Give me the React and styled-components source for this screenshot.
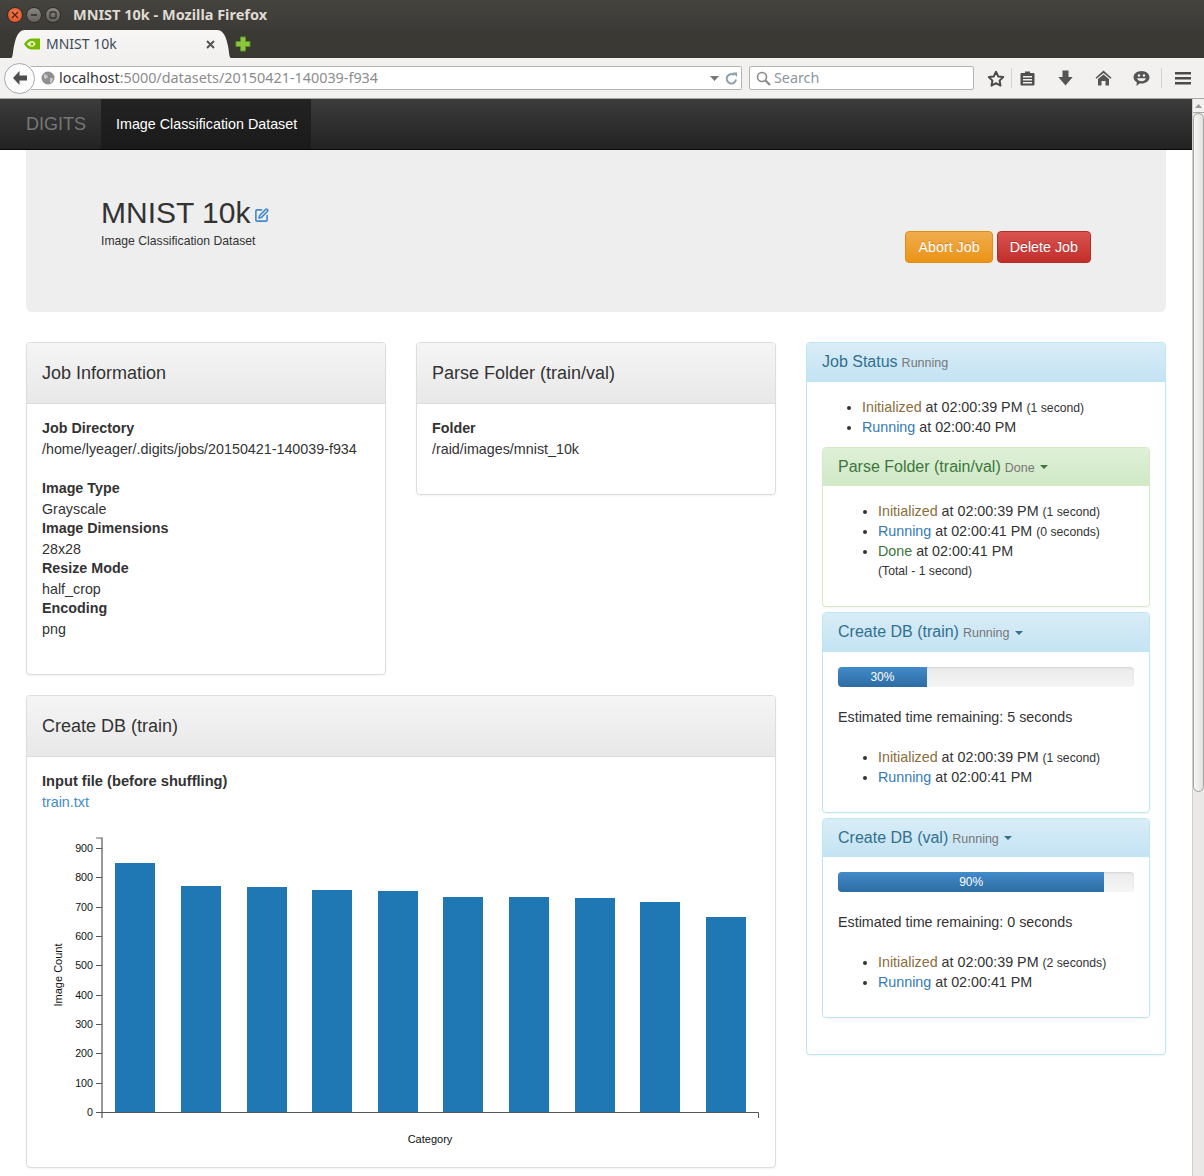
import React from 'react'
import styled, { createGlobalStyle } from 'styled-components'
import { SquarePen } from 'lucide-react'

const GlobalStyle = createGlobalStyle`
  html, body {
    margin: 0;
    padding: 0;
    background: #fff;
  }
  body {
    font-family: "Liberation Sans", Arial, sans-serif;
    font-size: 14.3px;
    line-height: 20px;
    color: #333;
  }
  * {
    box-sizing: border-box;
  }
`

const bars = [
  { x: 115, top: 862 },
  { x: 181, top: 885 },
  { x: 247, top: 886 },
  { x: 312, top: 889 },
  { x: 378, top: 890 },
  { x: 443, top: 896 },
  { x: 509, top: 896 },
  { x: 575, top: 897 },
  { x: 640, top: 901 },
  { x: 706, top: 916 },
]

const yTicks = [900, 800, 700, 600, 500, 400, 300, 200, 100, 0]

function Chart() {
  return (
    <ChartSvg width="750" height="330" viewBox="26 825 750 330">
      {bars.map((b) => (
        <rect key={b.x} x={b.x} y={b.top} width="40" height={1112 - b.top} fill="#1f77b4" />
      ))}
      <line x1="96" x2="102" y1="837" y2="837" stroke="#666" />
      <line x1="102" x2="102" y1="836.500" y2="1117" stroke="#777" strokeWidth="1.500" />
      <path d="M102 1111.500H758.500V1117" fill="none" stroke="#555" strokeWidth="1" />
      {yTicks.map((t) => {
        const y = Math.floor(1111.5 - t * 0.2933) + 0.5
        return (
          <g key={t}>
            <line x1="96" x2="102" y1={y} y2={y} stroke="#555" />
            <text x="93" y={y + 3.5} textAnchor="end" fontSize="10.7" fill="#111" fontFamily="Liberation Sans">{t}</text>
          </g>
        )
      })}
      <text x="430" y="1142" textAnchor="middle" fontSize="11" fill="#111" fontFamily="Liberation Sans">Category</text>
      <text transform="translate(62 974) rotate(-90)" textAnchor="middle" fontSize="11" fill="#111" fontFamily="Liberation Sans">Image Count</text>
    </ChartSvg>
  )
}

function StatusList({ items }) {
  return (
    <StatusUl>
      {items.map((it) => (
        <li key={it.state}>
          <StateName $state={it.state}>{it.state}</StateName> at {it.at}
          {it.took && <> <small>{it.took}</small></>}
          {it.total && <TotalLine>{it.total}</TotalLine>}
        </li>
      ))}
    </StatusUl>
  )
}

function SubPanel({ title, status, kind, children, height, headingHeight }) {
  return (
    <NestedPanel $kind={kind} $height={height}>
      <StatusHeading $kind={kind} $height={headingHeight}>
        <StatusTitle>{title}</StatusTitle> <StatusNote>{status}</StatusNote>
        <Caret />
      </StatusHeading>
      <NestedBody>{children}</NestedBody>
    </NestedPanel>
  )
}

function Progress({ value }) {
  return (
    <ProgressTrack>
      <ProgressBar style={{ width: `${value}%` }}>{value}%</ProgressBar>
    </ProgressTrack>
  )
}

export default function App() {
  return (
    <Screen>
      <GlobalStyle />
      <TitleBar>
        <WindowButtons>
          <WindowClose>
            <svg width="8" height="8" viewBox="0 0 8 8"><path d="M1 1l6 6M7 1l-6 6" stroke="#5b1d08" strokeWidth="1.4" /></svg>
          </WindowClose>
          <WindowButton>
            <svg width="8" height="8" viewBox="0 0 8 8"><path d="M1 4h6" stroke="#33312e" strokeWidth="1.6" /></svg>
          </WindowButton>
          <WindowButton>
            <svg width="8" height="8" viewBox="0 0 8 8"><rect x="1" y="1" width="6" height="6" rx="1" fill="none" stroke="#33312e" strokeWidth="1.3" /></svg>
          </WindowButton>
        </WindowButtons>
        <WindowTitle>MNIST 10k - Mozilla Firefox</WindowTitle>
      </TitleBar>
      <TabStrip>
        <ActiveTab>
          <svg width="16" height="12" viewBox="0 0 16 12">
            <path d="M0 6C2 2.5 5 .5 8 .5h8v11H7C4.500 11.500 2 9 0 6z" fill="#76b900" />
            <path d="M3 6c1.500-2 3-3 5-3 1.500 0 3 1 3.500 3-.5 1.500-2 2.800-3.500 2.800C6 8.800 4.500 7.800 3 6z" fill="#e8f3cf" />
            <circle cx="8" cy="6" r="1.500" fill="#76b900" />
          </svg>
          <TabLabel>MNIST 10k</TabLabel>
          <TabClose>
            <svg width="9" height="9" viewBox="0 0 9 9"><path d="M1 1l7 7M8 1l-7 7" stroke="#555" strokeWidth="2" /></svg>
          </TabClose>
        </ActiveTab>
        <NewTab>
          <svg width="16" height="16" viewBox="0 0 16 16">
            <path d="M5.500 1h5v4.500H15v5h-4.500V15h-5v-4.500H1v-5h4.500z" fill="#8cc63f" stroke="#5f8f26" strokeWidth="1" />
          </svg>
        </NewTab>
      </TabStrip>
      <NavToolbar>
        <BackButton>
          <svg width="18" height="16" viewBox="0 0 18 16">
            <path d="M8.500 1L2 8l6.500 7V10.500H16v-5H8.500z" fill="#4d4d4d" />
          </svg>
        </BackButton>
        <UrlBar>
          <svg width="14" height="14" viewBox="0 0 14 14">
            <circle cx="7" cy="7" r="6.500" fill="#8f8f8f" />
            <path d="M3 3l3 1 1 2-2 2-2-1zM9 7l3 0-1 4-2 1z" fill="#c9c9c9" />
          </svg>
          <UrlText><UrlHost>localhost</UrlHost>:5000/datasets/20150421-140039-f934</UrlText>
          <UrlActions>
            <svg width="9" height="5" viewBox="0 0 9 5"><path d="M0 0h9L4.500 5z" fill="#777" /></svg>
            <svg width="13" height="13" viewBox="0 0 13 13">
              <path d="M11 7.500A4.700 4.700 0 1 1 9.200 3" fill="none" stroke="#8aa0ad" strokeWidth="2" />
              <path d="M7.500 0.500h4.500v4.500z" fill="#8aa0ad" />
            </svg>
          </UrlActions>
        </UrlBar>
        <SearchBar>
          <svg width="15" height="15" viewBox="0 0 15 15">
            <circle cx="6" cy="6" r="4.500" fill="none" stroke="#8a8a8a" strokeWidth="1.600" />
            <path d="M9.500 9.500L14 14" stroke="#8a8a8a" strokeWidth="2.200" />
          </svg>
          <SearchText>Search</SearchText>
        </SearchBar>
        <ToolIcons>
          <ToolIcon $width={22}>
            <svg width="18" height="17" viewBox="0 0 18 17">
              <path d="M9 1.800l2.200 4.600 5 .7-3.600 3.500.9 5L9 13.200l-4.500 2.400.9-5L1.800 7.100l5-.7z" fill="none" stroke="#4a4a4a" strokeWidth="2" strokeLinejoin="round" />
            </svg>
          </ToolIcon>
          <ToolSeparator $offset={4} />
          <ToolIcon $width={30}>
            <svg width="15" height="16" viewBox="0 0 15 16">
              <path d="M5 1.500h5V3h3.500a1 1 0 0 1 1 1v10.500a1 1 0 0 1-1 1h-12a1 1 0 0 1-1-1V4a1 1 0 0 1 1-1H5z" fill="#4f4f4f" />
              <path d="M3 6h9v1.500H3zM3 9h9v1.500H3zM3 12h9v1.500H3z" fill="#f2f1f0" />
            </svg>
          </ToolIcon>
          <ToolIcon $width={46}>
            <svg width="15" height="16" viewBox="0 0 15 16">
              <path d="M4.500 0.500h6V7h4.200L7.500 15.500.3 7h4.200z" fill="#555" />
            </svg>
          </ToolIcon>
          <ToolIcon $width={30}>
            <svg width="17" height="16" viewBox="0 0 17 16">
              <path d="M8.500 0.500L0.500 7.800l1 1L8.500 3l7 5.800 1-1z" fill="#555" />
              <path d="M3 9l5.500-4.600L14 9v6.500h-3.500V11h-4v4.500H3z" fill="#555" />
            </svg>
          </ToolIcon>
          <ToolIcon $width={46}>
            <svg width="17" height="17" viewBox="0 0 17 17">
              <path d="M8.500 1C12.900 1 16.500 3.800 16.500 7.300s-3.600 6.300-8 6.300c-.7 0-1.300-.1-2-.2L3.500 16l.3-3.700C1.900 11.200.5 9.400.500 7.300.5 3.800 4.100 1 8.500 1z" fill="#555" />
              <circle cx="6" cy="5.500" r="1.200" fill="#f2f1f0" />
              <circle cx="11" cy="5.500" r="1.200" fill="#f2f1f0" />
              <path d="M4 8.200h9c-.6 2-2.400 3-4.500 3S4.600 10.200 4 8.200z" fill="#f2f1f0" />
            </svg>
          </ToolIcon>
          <ToolSeparator $offset={-3} />
          <ToolIcon $width={42}>
            <svg width="16" height="13" viewBox="0 0 16 13">
              <path d="M0 0h16v2.500H0zM0 5h16v2.500H0zM0 10h16v2.500H0z" fill="#4a4a4a" />
            </svg>
          </ToolIcon>
        </ToolIcons>
      </NavToolbar>
      <Viewport>
        <Page>
          <Navbar>
            <Brand>DIGITS</Brand>
            <ActiveNav>Image Classification Dataset</ActiveNav>
          </Navbar>
          <Container>
            <Jumbotron>
              <div>
                <JobName>MNIST 10k<EditIcon><SquarePen size={15} strokeWidth={2.6} /></EditIcon></JobName>
                <JobKind>Image Classification Dataset</JobKind>
              </div>
              <JobButtons>
                <ActionButton $kind="warning">Abort Job</ActionButton>
                <ActionButton $kind="danger">Delete Job</ActionButton>
              </JobButtons>
            </Jumbotron>
            <Columns>
              <LeftColumn>
                <TopRow>
                  <Panel $height={333}>
                    <PanelHeading>Job Information</PanelHeading>
                    <PanelBody>
                      <InfoList>
                        <dt>Job Directory</dt>
                        <dd>/home/lyeager/.digits/jobs/20150421-140039-f934</dd>
                      </InfoList>
                      <InfoList>
                        <dt>Image Type</dt>
                        <dd>Grayscale</dd>
                        <dt>Image Dimensions</dt>
                        <dd>28x28</dd>
                        <dt>Resize Mode</dt>
                        <dd>half_crop</dd>
                        <dt>Encoding</dt>
                        <dd>png</dd>
                      </InfoList>
                    </PanelBody>
                  </Panel>
                  <Panel $height={153}>
                    <PanelHeading>Parse Folder (train/val)</PanelHeading>
                    <PanelBody>
                      <InfoList>
                        <dt>Folder</dt>
                        <dd>/raid/images/mnist_10k</dd>
                      </InfoList>
                    </PanelBody>
                  </Panel>
                </TopRow>
                <Panel $height={473}>
                  <PanelHeading>Create DB (train)</PanelHeading>
                  <PanelBody>
                    <InfoList $labelSize={14.65}>
                      <dt>Input file (before shuffling)</dt>
                      <dd><FileLink>train.txt</FileLink></dd>
                    </InfoList>
                    <Chart />
                  </PanelBody>
                </Panel>
              </LeftColumn>
              <StatusPanel>
                <StatusHeading $kind="info" $height={39}>
                  <StatusTitle>Job Status</StatusTitle> <StatusNote>Running</StatusNote>
                </StatusHeading>
                <StatusBody>
                  <StatusList items={[
                    { state: 'Initialized', at: '02:00:39 PM', took: '(1 second)' },
                    { state: 'Running', at: '02:00:40 PM' },
                  ]} />
                  <SubPanel title="Parse Folder (train/val)" status="Done" kind="success" height={160}>
                    <StatusList items={[
                      { state: 'Initialized', at: '02:00:39 PM', took: '(1 second)' },
                      { state: 'Running', at: '02:00:41 PM', took: '(0 seconds)' },
                      { state: 'Done', at: '02:00:41 PM', total: '(Total - 1 second)' },
                    ]} />
                  </SubPanel>
                  <SubPanel title="Create DB (train)" status="Running" kind="info" height={201} headingHeight={39}>
                    <Progress value={30} />
                    <Remaining>Estimated time remaining: 5 seconds</Remaining>
                    <StatusList items={[
                      { state: 'Initialized', at: '02:00:39 PM', took: '(1 second)' },
                      { state: 'Running', at: '02:00:41 PM' },
                    ]} />
                  </SubPanel>
                  <SubPanel title="Create DB (val)" status="Running" kind="info" height={200}>
                    <Progress value={90} />
                    <Remaining>Estimated time remaining: 0 seconds</Remaining>
                    <StatusList items={[
                      { state: 'Initialized', at: '02:00:39 PM', took: '(2 seconds)' },
                      { state: 'Running', at: '02:00:41 PM' },
                    ]} />
                  </SubPanel>
                </StatusBody>
              </StatusPanel>
            </Columns>
          </Container>
        </Page>
        <Scrollbar>
          <ScrollUp>
            <svg width="7" height="4" viewBox="0 0 7 4"><path d="M0 4L3.500 0 7 4z" fill="#999" /></svg>
          </ScrollUp>
          <ScrollThumb />
        </Scrollbar>
      </Viewport>
    </Screen>
  )
}

const headingColors = {
  info: { color: '#31708f', from: '#d9edf7', to: '#c4e3f3', border: '#bce8f1' },
  success: { color: '#3c763d', from: '#dff0d8', to: '#d0e9c6', border: '#d6e9c6' },
}

const stateColors = {
  Initialized: '#8a6d3b',
  Running: '#337ab7',
  Done: '#3c763d',
}

const Screen = styled.div`
  width: 1204px;
  height: 1176px;
  overflow: hidden;
  display: flex;
  flex-direction: column;
`

const TitleBar = styled.div`
  height: 29px;
  flex: none;
  display: flex;
  align-items: center;
  padding-left: 7px;
  background: linear-gradient(#45433e, #3d3b37);
`

const WindowButtons = styled.div`
  display: flex;
  gap: 3px;
  width: 66px;
`

const WindowButton = styled.span`
  width: 16px;
  height: 16px;
  border-radius: 50%;
  display: flex;
  align-items: center;
  justify-content: center;
  background: linear-gradient(#8a8780, #63615b);
  border: 1px solid #2f2d2a;
`

const WindowClose = styled(WindowButton)`
  background: radial-gradient(circle at 50% 40%, #f58258, #dd4814);
`

const WindowTitle = styled.span`
  margin-bottom: 2px;
  font-family: "Noto Sans", sans-serif;
  font-weight: 700;
  font-size: 14.5px;
  color: #dfdbd2;
`

const TabStrip = styled.div`
  height: 29px;
  flex: none;
  display: flex;
  align-items: flex-end;
  padding-left: 11px;
  background: #3b3934;
`

const ActiveTab = styled.div`
  width: 220px;
  height: 28px;
  display: flex;
  align-items: center;
  padding: 0 16px 0 13px;
  gap: 6px;
  clip-path: path("M0 28C2 28 2 20 3 16C5 6 8 0 14 0H206C212 0 215 6 217 16C218 20 218 28 220 28Z");
  background: linear-gradient(#f7f6f5, #f2f1f0);
`

const TabLabel = styled.span`
  flex: 1;
  font-family: "Noto Sans", sans-serif;
  font-size: 14px;
  color: #3c4a57;
`

const TabClose = styled.span`
  display: flex;
`

const NewTab = styled.span`
  display: flex;
  margin: 0 0 6px 4px;
`

const NavToolbar = styled.div`
  height: 41px;
  flex: none;
  display: flex;
  align-items: center;
  padding: 0 0 0 4px;
  background: #f2f1f0;
  border-bottom: 1px solid #a9a7a3;
`

const BackButton = styled.span`
  width: 31px;
  height: 31px;
  flex: none;
  display: flex;
  align-items: center;
  justify-content: center;
  border-radius: 50%;
  background: #fbfbfb;
  border: 1px solid #a5aab0;
  position: relative;
  z-index: 1;
`

const UrlBar = styled.div`
  width: 711px;
  height: 24px;
  margin-left: -4px;
  padding: 0 3px 0 10px;
  display: flex;
  align-items: center;
  gap: 4px;
  background: #fff;
  border: 1px solid #b5b3af;
  border-left: none;
  border-radius: 0 2px 2px 0;
`

const UrlText = styled.span`
  flex: 1;
  font-family: "Noto Sans", sans-serif;
  font-size: 14.36px;
  color: #8c8c8c;
`

const UrlHost = styled.span`
  color: #333;
`

const UrlActions = styled.span`
  display: flex;
  align-items: center;
  gap: 6px;
`

const SearchBar = styled.div`
  width: 225px;
  height: 24px;
  margin-left: 7px;
  padding: 0 6px;
  display: flex;
  align-items: center;
  gap: 3px;
  background: #fff;
  border: 1px solid #b5b3af;
  border-radius: 2px;
`

const SearchText = styled.span`
  font-family: "Noto Sans", sans-serif;
  font-size: 14.3px;
  color: #8d96a0;
`

const ToolIcons = styled.div`
  display: flex;
  align-items: center;
  margin-left: 11px;
`

const ToolIcon = styled.span`
  width: ${({ $width }) => $width}px;
  display: flex;
  justify-content: center;
`

const ToolSeparator = styled.span`
  width: 1px;
  height: 20px;
  margin-left: ${({ $offset }) => $offset}px;
  background: #d4d3d0;
`

const Viewport = styled.div`
  flex: 1;
  min-height: 0;
  display: flex;
`

const Page = styled.div`
  width: 1192px;
  flex: none;
  overflow: hidden;
`

const Navbar = styled.div`
  height: 51px;
  padding-left: 26px;
  display: flex;
  background: linear-gradient(#3c3c3c, #222);
  border-bottom: 1px solid #080808;
`

const Brand = styled.span`
  width: 75px;
  font-size: 18px;
  line-height: 50px;
  color: #777;
`

const ActiveNav = styled.span`
  width: 210px;
  padding: 0 15px;
  line-height: 50px;
  white-space: nowrap;
  color: #fff;
  background: linear-gradient(#232323, #1a1a1a);
`

const Container = styled.div`
  width: 1140px;
  margin-left: 26px;
`

const Jumbotron = styled.div`
  height: 162px;
  margin-bottom: 30px;
  padding: 46px 75px 0;
  display: flex;
  justify-content: space-between;
  background: #eee;
  border-radius: 0 0 6px 6px;
`

const JobName = styled.h1`
  margin: 0;
  display: flex;
  align-items: flex-end;
  font-size: 30px;
  font-weight: 400;
  line-height: 33px;
  color: #333;
`

const EditIcon = styled.span`
  display: flex;
  margin: 0 0 6px 3px;
  color: #428bca;
`

const JobKind = styled.div`
  margin-top: 4px;
  font-size: 12.2px;
  line-height: 17px;
`

const JobButtons = styled.div`
  display: flex;
  gap: 4px;
  margin-top: 35px;
  align-self: flex-start;
`

const ActionButton = styled.span`
  height: 32px;
  padding: 0 12px;
  display: flex;
  align-items: center;
  color: #fff;
  border-radius: 4px;
  border: 1px solid ${({ $kind }) => ($kind === 'warning' ? '#e38d13' : '#b92c28')};
  background: ${({ $kind }) => ($kind === 'warning'
    ? 'linear-gradient(#f0ad4e, #eb9316)'
    : 'linear-gradient(#d9534f, #c12e2a)')};
  text-shadow: 0 -1px 0 rgba(0, 0, 0, .2);
`

const Columns = styled.div`
  display: grid;
  grid-template-columns: 750px 360px;
  column-gap: 30px;
  align-items: start;
`

const LeftColumn = styled.div`
  display: flex;
  flex-direction: column;
  gap: 20px;
`

const TopRow = styled.div`
  display: grid;
  grid-template-columns: 360px 360px;
  column-gap: 30px;
  align-items: start;
`

const Panel = styled.section`
  height: ${({ $height }) => $height}px;
  background: #fff;
  border: 1px solid #ddd;
  border-radius: 4px;
  box-shadow: 0 1px 2px rgba(0, 0, 0, .05);
`

const PanelHeading = styled.h3`
  margin: 0;
  height: 61px;
  padding: 0 15px;
  display: flex;
  align-items: center;
  font-size: 18px;
  font-weight: 400;
  color: #333;
  background: linear-gradient(#f5f5f5, #e8e8e8);
  border-bottom: 1px solid #ddd;
  border-radius: 3px 3px 0 0;
`

const PanelBody = styled.div`
  padding: 14px 15px;
`

const InfoList = styled.dl`
  margin: 0 0 20px;
  dt {
    font-weight: 700;
    font-size: ${({ $labelSize }) => $labelSize || 14.3}px;
  }
  dd {
    margin: 0 0 -1px;
    padding-top: 1px;
  }
`

const FileLink = styled.span`
  color: #428bca;
`

const ChartSvg = styled.svg`
  display: block;
  margin: -6px 0 0 -16px;
`

const StatusPanel = styled.section`
  height: 713px;
  background: #fff;
  border: 1px solid #bce8f1;
  border-radius: 4px;
  box-shadow: 0 1px 2px rgba(0, 0, 0, .05);
`

const StatusHeading = styled.div`
  height: ${({ $height }) => $height || 38}px;
  padding: 0 15px;
  display: flex;
  align-items: center;
  gap: 4px;
  color: ${({ $kind }) => headingColors[$kind].color};
  background: linear-gradient(${({ $kind }) => headingColors[$kind].from}, ${({ $kind }) => headingColors[$kind].to});
  border-bottom: 1px solid ${({ $kind }) => headingColors[$kind].border};
  border-radius: 3px 3px 0 0;
`

const StatusTitle = styled.span`
  font-size: 16px;
`

const StatusNote = styled.small`
  font-size: 12.5px;
  margin-top: 2px;
  color: #777;
`

const Caret = styled.span`
  width: 0;
  height: 0;
  margin: 1px 0 0 1px;
  border-top: 4px solid currentColor;
  border-left: 4px solid transparent;
  border-right: 4px solid transparent;
`

const StatusBody = styled.div`
  padding: 15px;
  display: flex;
  flex-direction: column;
`

const StatusUl = styled.ul`
  margin: 0 0 10px;
  padding-left: 40px;
  small {
    font-size: 12.2px;
    line-height: 1;
  }
`

const StateName = styled.span`
  color: ${({ $state }) => stateColors[$state]};
`

const TotalLine = styled.small`
  display: block;
  line-height: 20px !important;
`

const NestedPanel = styled.div`
  height: ${({ $height }) => $height}px;
  margin-bottom: 5px;
  border: 1px solid ${({ $kind }) => headingColors[$kind].border};
  border-radius: 4px;
  box-shadow: 0 1px 2px rgba(0, 0, 0, .05);
`

const NestedBody = styled.div`
  padding: 15px;
`

const ProgressTrack = styled.div`
  height: 20px;
  margin-bottom: 20px;
  overflow: hidden;
  background: linear-gradient(#ebebeb, #f5f5f5);
  border-radius: 4px;
  box-shadow: inset 0 1px 2px rgba(0, 0, 0, .1);
`

const ProgressBar = styled.div`
  height: 100%;
  font-size: 12px;
  line-height: 20px;
  text-align: center;
  color: #fff;
  background: linear-gradient(#428bca, #2d6ca2);
`

const Remaining = styled.p`
  margin: 0 0 20px;
`

const Scrollbar = styled.div`
  width: 12px;
  flex: none;
  display: flex;
  flex-direction: column;
  align-items: center;
  background: #e9e8e6;
  border-left: 1px solid #d0cfcc;
`

const ScrollUp = styled.span`
  width: 100%;
  height: 14px;
  display: flex;
  align-items: center;
  justify-content: center;
  background: #f2f1f0;
  border-bottom: 1px solid #a9a7a3;
`

const ScrollThumb = styled.span`
  width: 11px;
  height: 679px;
  background: linear-gradient(90deg, #f6f6f5, #e2e1df);
  border: 1px solid #a5a3a0;
  border-radius: 6px;
`
